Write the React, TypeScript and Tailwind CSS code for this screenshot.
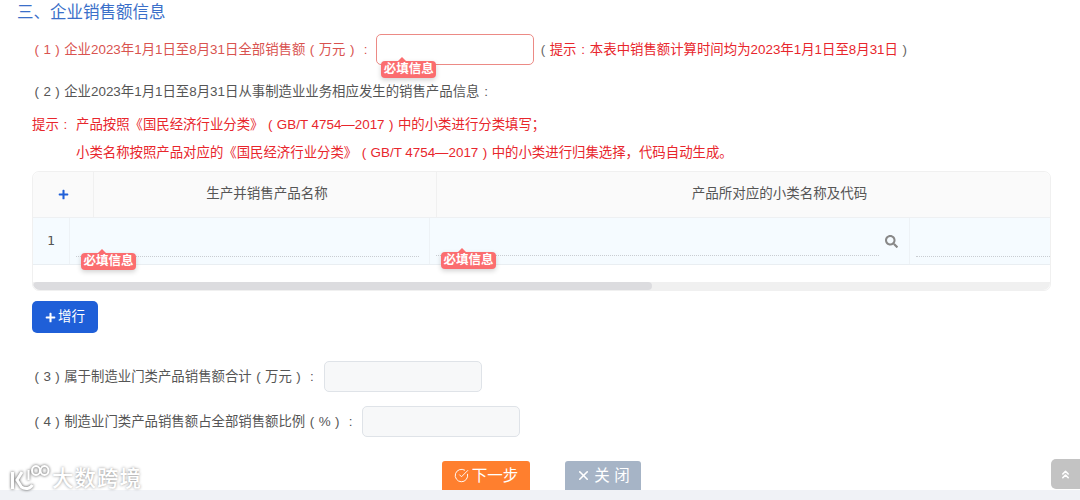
import type { ReactNode } from "react";
import { X, CircleCheckBig, ChevronsUp } from "lucide-react";
import { FaPlus, FaSearch } from "react-icons/fa";

const font = "font-['Liberation_Sans','Noto_Sans_CJK_SC',sans-serif]";

// full-width punctuation with the ink centred in its cell
function Fw({ children, className = "" }: { children: ReactNode; className?: string }) {
  return <span className={`inline-block w-[1em] text-center ${className}`}>{children}</span>;
}

function RequiredTip({ className }: { className: string }) {
  return (
    <span className={`absolute flex h-[17px] w-[55px] items-center justify-center rounded-[4px] bg-[#fb6d6f] text-[12.5px] font-bold leading-none text-white shadow-[0_2px_5px_rgba(0,0,0,0.18)] ${className}`}>
      <span className="absolute -top-[4px] left-[16px] h-0 w-0 border-x-[5px] border-b-[5px] border-x-transparent border-b-[#fb6d6f]" />
      必填信息
    </span>
  );
}

export default function App() {
  return (
    <div className={`relative flex h-[500px] w-[1080px] flex-col overflow-hidden bg-white ${font}`}>
      <h2 className="ml-[17px] mt-[1px] text-[16.5px] leading-[22px] text-[#3b6fc9]">三、企业销售额信息</h2>

      <div className="mt-[11px] flex items-center pl-[30px] text-[13.4px] text-[#d9534f]">
        <span className="mt-[2px]">
          <Fw>(</Fw>1<Fw>)</Fw>企业2023年1月1日至8月31日全部销售额<Fw>(</Fw>万元<Fw>)</Fw><Fw>:</Fw>
        </span>
        <div className="relative ml-[4px] h-[31px] w-[158px] rounded-[5px] border border-[#ec8a85] bg-white">
          <RequiredTip className="left-[4px] top-[26px]" />
        </div>
        <span className="ml-[2px] mt-[2px]">
          <Fw className="text-[#666]">(</Fw>
          <span className="text-[#e8262c]">提示<Fw>:</Fw>本表中销售额计算时间均为2023年1月1日至8月31日</span>
          <Fw className="text-[#666]">)</Fw>
        </span>
      </div>

      <div className="mt-[17px] pl-[30px] text-[13.4px] leading-[20px] text-[#555]">
        <Fw>(</Fw>2<Fw>)</Fw>企业2023年1月1日至8月31日从事制造业业务相应发生的销售产品信息<Fw>:</Fw>
      </div>

      <div className="mt-[13px] pl-[32px] text-[13.4px] leading-[20px] text-[#e8262c]">
        <div className="flex">
          <span className="w-[44px]">提示<Fw>:</Fw></span>
          <span>产品按照《国民经济行业分类》<Fw>(</Fw>GB/T 4754—2017<Fw>)</Fw>中的小类进行分类填写；</span>
        </div>
        <div className="mt-[8px] pl-[44px]">
          小类名称按照产品对应的《国民经济行业分类》<Fw>(</Fw>GB/T 4754—2017<Fw>)</Fw>中的小类进行归集选择，代码自动生成。
        </div>
      </div>

      <div className="ml-[32px] mt-[8px] w-[1019px] rounded-[7px] border border-[#f0f0f0]">
        <div className="flex h-[46px] rounded-t-[7px] border-b border-[#eef0f2] bg-[#fafafa] text-[13.5px] text-[#555]">
          <div className="flex w-[61px] items-center justify-center border-r border-[#f0f0f0]">
            <FaPlus className="h-[11px] w-[11px] text-[#1f5fd8]" />
          </div>
          <div className="flex w-[343px] items-center justify-center border-r border-[#f0f0f0] pl-[4px]">生产并销售产品名称</div>
          <div className="flex flex-1 items-center justify-center pl-[72px]">产品所对应的小类名称及代码</div>
        </div>
        <div className="flex h-[47px] border-b border-[#e9eef2] bg-[#f5fbff]">
          <div className="flex w-[37px] items-center justify-center border-r border-[#edf2f6] font-['DejaVu_Sans_Mono',monospace] text-[13px] text-[#555]">1</div>
          <div className="relative w-[360px] border-r border-[#edf2f6]">
            <div className="absolute bottom-[7px] left-[6px] right-[10px] border-b border-dotted border-[#c9cdd2]" />
            <RequiredTip className="left-[11px] top-[35px]" />
          </div>
          <div className="relative w-[480px] border-r border-[#edf2f6]">
            <div className="absolute bottom-[8px] left-[6px] right-[30px] border-b border-dotted border-[#c9cdd2]" />
            <FaSearch className="absolute right-[11px] top-[17px] h-[13px] w-[13px] text-[#888]" />
            <RequiredTip className="left-[11px] top-[34px]" />
          </div>
          <div className="relative flex-1">
            <div className="absolute bottom-[7px] left-[6px] right-0 border-b border-dotted border-[#c9cdd2]" />
          </div>
        </div>
        <div className="h-[17px]" />
        <div className="h-[8px] overflow-hidden rounded-b-[7px] bg-[#f0f0f0]">
          <div className="h-full w-[619px] rounded-[4px] bg-[#dcdcdf]" />
        </div>
      </div>

      <button className="ml-[32px] mt-[10px] flex h-[32px] w-[66px] items-center justify-center gap-[2px] rounded-[5px] bg-[#1f5fd8] text-[13.5px] text-white">
        <FaPlus className="h-[11px] w-[11px]" />
        增行
      </button>

      <div className="mt-[28px] flex items-center pl-[30px] text-[13.4px] text-[#555]">
        <span className="mt-[2px]"><Fw>(</Fw>3<Fw>)</Fw>属于制造业门类产品销售额合计<Fw>(</Fw>万元<Fw>)</Fw><Fw>:</Fw></span>
        <div className="ml-[5px] h-[31px] w-[158px] rounded-[5px] border border-[#dfe3e8] bg-[#f7f8f9]" />
      </div>
      <div className="mt-[14px] flex items-center pl-[30px] text-[13.4px] text-[#555]">
        <span className="mt-[2px]"><Fw>(</Fw>4<Fw>)</Fw>制造业门类产品销售额占全部销售额比例<Fw>(</Fw>%<Fw>)</Fw><Fw>:</Fw></span>
        <div className="ml-[5px] h-[31px] w-[158px] rounded-[5px] border border-[#dfe3e8] bg-[#f7f8f9]" />
      </div>

      <div className="ml-[442px] mt-[24px] flex h-[29px] gap-[35px]">
        <button className="flex w-[88px] items-center justify-center gap-[3px] rounded-t-[3px] bg-[#ff7f2e] text-[15.5px] text-white">
          <CircleCheckBig className="h-[15px] w-[15px]" strokeWidth={1.5} />
          下一步
        </button>
        <button className="flex w-[76px] items-center justify-center gap-[3px] rounded-t-[3px] bg-[#a6b4c6] text-[15.5px] text-white">
          <X className="h-[15px] w-[15px]" strokeWidth={2.5} />
          关 闭
        </button>
      </div>

      <div className="mt-auto h-[10px] bg-[#f0f2f6]" />

      <button className="absolute right-0 top-[459px] flex h-[30px] w-[29px] items-center justify-center rounded-l-[5px] bg-[#c3c3c3] text-white">
        <ChevronsUp className="h-[13px] w-[13px]" strokeWidth={3} />
      </button>

      <div className="absolute left-[9px] top-[464px] flex items-start gap-[2px] text-white [text-shadow:0_0_3px_rgba(0,0,0,0.45)]">
        <svg width="41" height="27" viewBox="0 0 41 27" fill="none" stroke="white" strokeWidth="2" className="drop-shadow-[0_0_1.5px_rgba(0,0,0,0.7)]">
          <path d="M3.5 8v17" strokeWidth="3" />
          <path d="M13 8 8 16l4.5 7c3.5 2.5 8.5 2 11-2" strokeWidth="3" />
          <path d="M19.5 6v10" strokeWidth="2" />
          <ellipse cx="27" cy="6.5" rx="4" ry="4.5" />
          <ellipse cx="35.5" cy="6.5" rx="4" ry="4.5" />
        </svg>
        <span className="mt-[5px] text-[21.5px] font-medium leading-none tracking-[1px]">大数跨境</span>
      </div>
    </div>
  );
}
